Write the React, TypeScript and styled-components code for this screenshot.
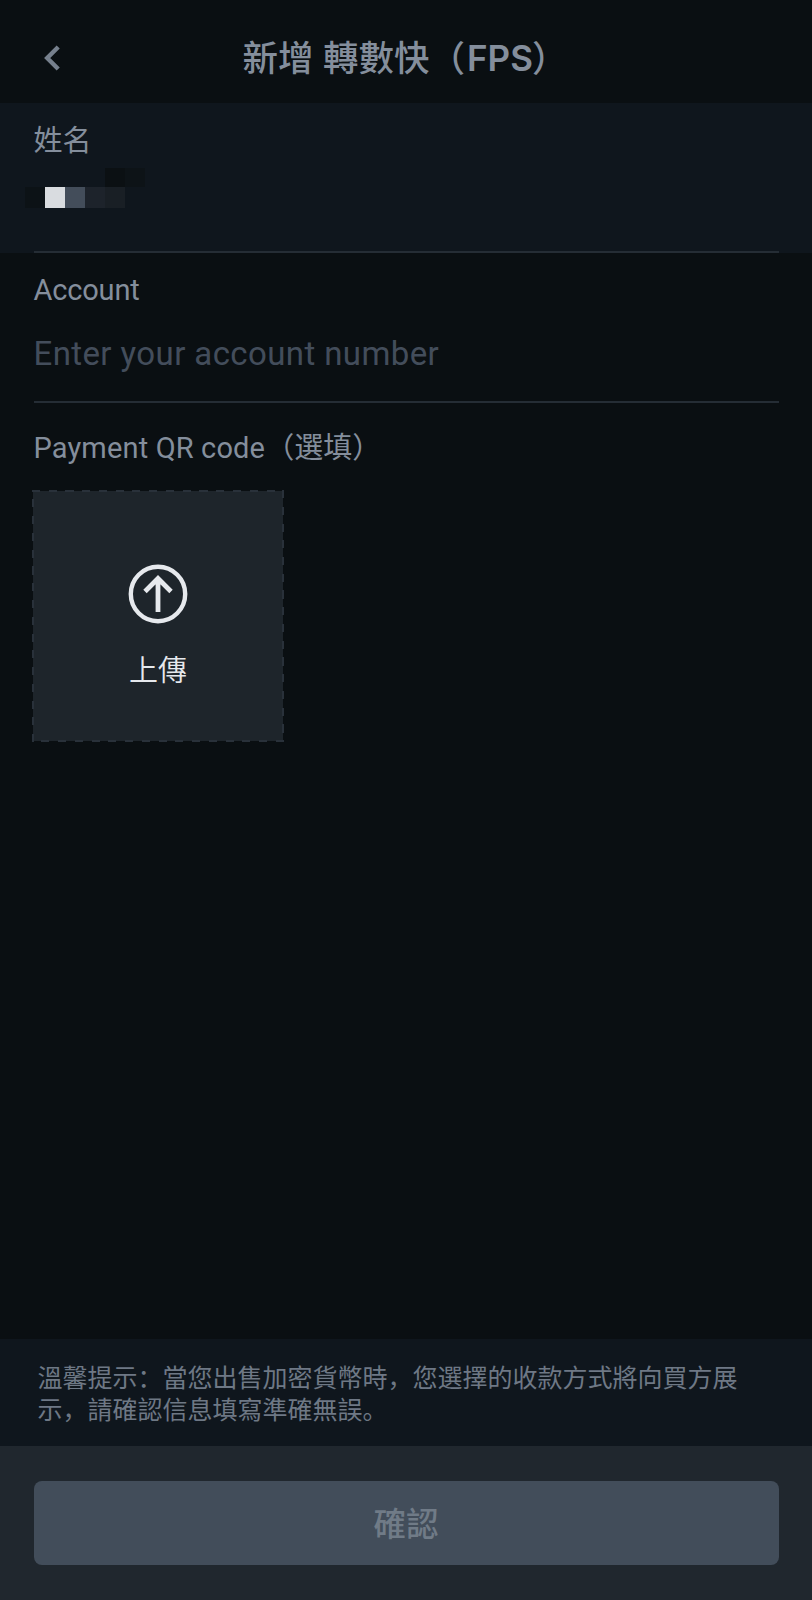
import React from "react";
import styled, { createGlobalStyle } from "styled-components";

const GlobalStyle = createGlobalStyle`
  *, *::before, *::after { box-sizing: border-box; }
  html, body { margin: 0; background: #0a0f12; }
  body { font-family: Roboto, "Noto Sans CJK SC", sans-serif; }
  button, input { font: inherit; }
`;

const Screen = styled.main`
  display: flex;
  flex-direction: column;
  width: 100%;
  height: 1600px;
  background: #0a0f12;
  color: #848e9c;
`;

const Header = styled.header`
  display: grid;
  grid-template-columns: 100px 1fr 102px;
  align-items: center;
  height: 103px;
  padding-top: 13px;
`;

const BackButton = styled.button`
  display: flex;
  padding: 0 0 0 43px;
  border: 0;
  background: none;
  color: #76808d;
`;

const Title = styled.h1`
  margin: 0;
  font-family: Inter, "Noto Sans CJK SC", sans-serif;
  font-size: 35.5px;
  font-weight: 500;
  line-height: 50px;
  text-align: center;
  white-space: nowrap;
`;

const Latin = styled.span`
  margin: 0 -1px 0 2px;
  font-weight: 600;
  font-size: 35px;
`;

const Section = styled.section<{ $height: number; $top: number; $filled?: boolean }>`
  display: flex;
  flex-direction: column;
  height: ${(p) => p.$height}px;
  padding: ${(p) => p.$top}px 33.5px 0;
  background: ${(p) => (p.$filled ? "#0f161d" : "transparent")};
`;

const Label = styled.label`
  display: block;
  font-size: 29px;
  line-height: 40px;
  white-space: nowrap;
`;

const LabelLatin = styled.span<{ $spacing: number }>`
  letter-spacing: ${(p) => p.$spacing}px;
`;

const Divider = styled.hr`
  width: 100%;
  height: 2px;
  margin: auto 0 0;
  border: 0;
  background: #252d35;
`;

const MaskedName = styled.div`
  display: grid;
  grid-template-columns: repeat(6, 20px);
  grid-template-rows: 19px 21px;
  margin: 7px 0 0 -8.5px;
`;

const MaskCell = styled.span<{ $tone: string }>`
  background: ${(p) => p.$tone};
`;

const AccountInput = styled.input`
  width: 100%;
  height: 50px;
  margin-top: 18px;
  padding: 0;
  border: 0;
  outline: 0;
  background: none;
  font-size: 33px;
  letter-spacing: 0.4px;
  color: #eaecef;
  &::placeholder { color: #434d5b; opacity: 1; }
`;

const dash = "#29313a 0 8px, transparent 8px 16.75px";

const UploadBox = styled.button`
  display: flex;
  flex-direction: column;
  align-items: center;
  width: 252px;
  height: 252px;
  margin: 22px 0 0 -1.5px;
  padding: 74px 0 0;
  border: 0;
  background:
    repeating-linear-gradient(to right, ${dash}) 0 0 / 100% 2px no-repeat,
    repeating-linear-gradient(to left, ${dash}) 0 100% / 100% 2px no-repeat,
    repeating-linear-gradient(to top, ${dash}) 0 0 / 2px 100% no-repeat,
    repeating-linear-gradient(to bottom, ${dash}) 100% 0 / 2px 100% no-repeat,
    linear-gradient(#1e252b, #1e252b) 1px 1px / 250px 250px no-repeat;
  color: #e6e9ed;
`;

const UploadText = styled.span`
  margin-top: 27px;
  font-size: 29px;
  font-weight: 350;
  line-height: 40px;
`;

const Notice = styled.p`
  height: 107px;
  margin: auto 0 0;
  padding: 21px 36px 0 37.5px;
  background: #0f161d;
  color: #6e7885;
  font-family: "Noto Sans CJK SC", sans-serif;
  font-size: 25px;
  line-height: 32px;
`;

const Footer = styled.footer`
  height: 154px;
  padding: 35px 33.5px 0;
  background: #20272e;
`;

const ConfirmButton = styled.button`
  display: block;
  width: 100%;
  height: 84px;
  padding: 0 0 4px;
  border: 0;
  border-radius: 8px;
  background: #424d5a;
  color: #707b87;
  font-size: 32.5px;
  font-weight: 500;
`;

const maskTones = [
  "transparent", "transparent", "transparent", "transparent", "#0b1013", "#0d1317",
  "#0c1216", "#d9dce0", "#434d5a", "#1d232b", "#191f25", "transparent",
];

export default function App() {
  return (
    <>
      <GlobalStyle />
      <Screen>
        <Header>
          <BackButton aria-label="返回">
            <svg width="18" height="26" viewBox="0 0 18 26" fill="none">
              <path d="M15.2 2 L4.2 13 L15.2 24" stroke="currentColor" strokeWidth="4.4" />
            </svg>
          </BackButton>
          <Title>新增 轉數快（<Latin>FPS</Latin>）</Title>
        </Header>

        <Section $height={150} $top={18} $filled>
          <Label>姓名</Label>
          <MaskedName>
            {maskTones.map((tone, i) => <MaskCell key={i} $tone={tone} />)}
          </MaskedName>
          <Divider />
        </Section>

        <Section $height={150} $top={17}>
          <Label htmlFor="account"><LabelLatin $spacing={-0.18}>Account</LabelLatin></Label>
          <AccountInput id="account" placeholder="Enter your account number" />
          <Divider />
        </Section>

        <Section $height={340} $top={25}>
          <Label><LabelLatin $spacing={0.15}>Payment QR code</LabelLatin>（選填）</Label>
          <UploadBox>
            <svg width="60" height="60" viewBox="0 0 60 60" fill="none" stroke="currentColor">
              <circle cx="30" cy="30" r="27.2" strokeWidth="4.4" />
              <path d="M30 48 V15 M17 27.5 L30 14.5 L43 27.5" strokeWidth="4.8" />
            </svg>
            <UploadText>上傳</UploadText>
          </UploadBox>
        </Section>

        <Notice>溫馨提示：當您出售加密貨幣時，您選擇的收款方式將向買方展示，請確認信息填寫準確無誤。</Notice>
        <Footer>
          <ConfirmButton>確認</ConfirmButton>
        </Footer>
      </Screen>
    </>
  );
}
